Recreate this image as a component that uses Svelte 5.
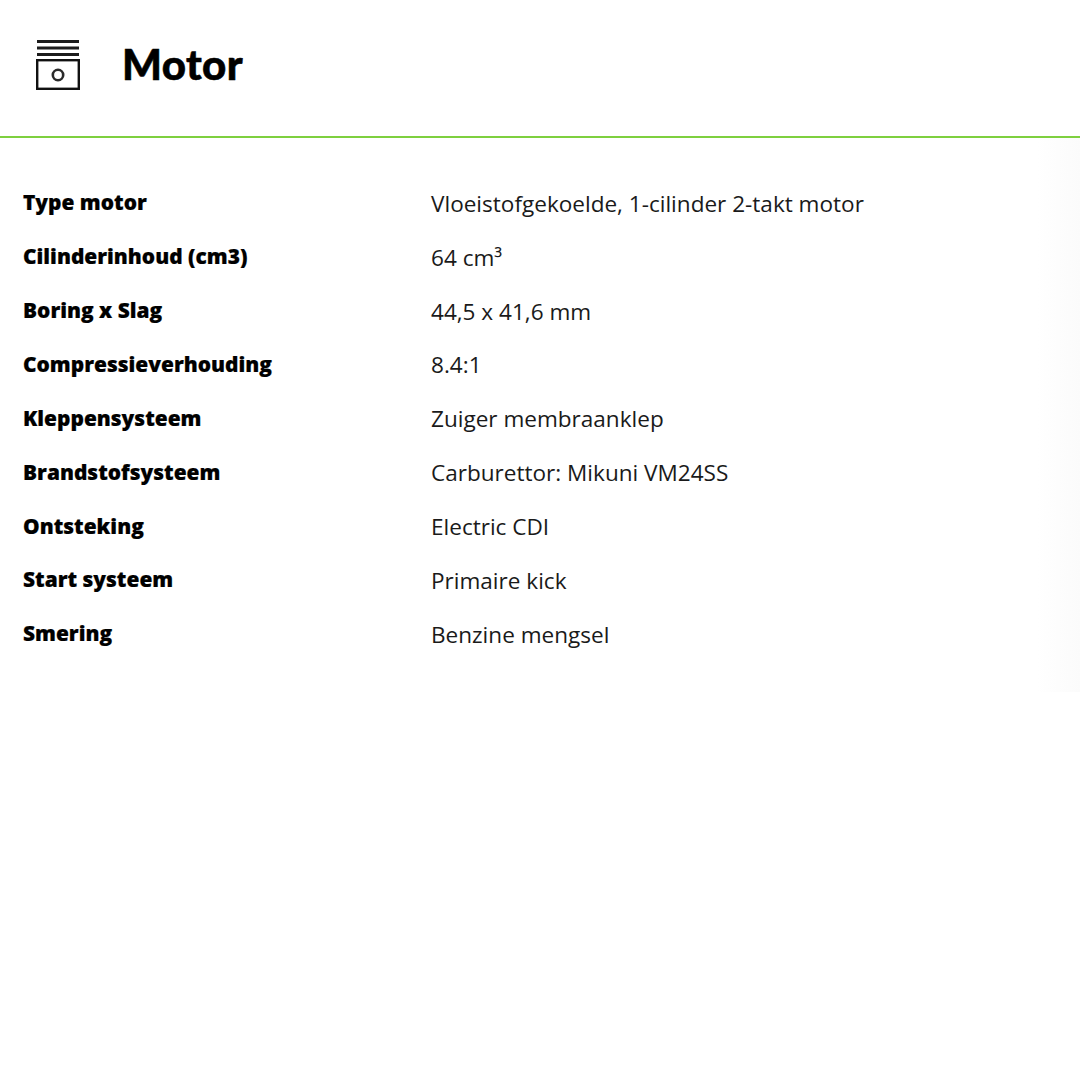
<script>
  const rows = [
    ['Type motor', 'Vloeistofgekoelde, 1-cilinder 2-takt motor'],
    ['Cilinderinhoud (cm3)', '64 cm³'],
    ['Boring x Slag', '44,5 x 41,6 mm'],
    ['Compressieverhouding', '8.4:1'],
    ['Kleppensysteem', 'Zuiger membraanklep'],
    ['Brandstofsysteem', 'Carburettor: Mikuni VM24SS'],
    ['Ontsteking', 'Electric CDI'],
    ['Start systeem', 'Primaire kick'],
    ['Smering', 'Benzine mengsel']
  ];
</script>

<div class="panel">
  <header class="head">
    <svg class="icon" width="44" height="50" viewBox="0 0 44 50" aria-hidden="true">
      <path d="M1 1.5h42M1 8h42M1 14.5h42" stroke="#1c1c1c" stroke-width="3" fill="none"/>
      <rect x="1.2" y="20.2" width="41.6" height="28.6" fill="none" stroke="#111" stroke-width="2.4"/>
      <circle cx="22" cy="35" r="5.2" fill="none" stroke="#2a2a2a" stroke-width="2.6"/>
    </svg>
    <h1>Motor</h1>
  </header>
  <div class="table">
    {#each rows as [k, v]}
      <div class="row"><div class="key">{k}</div><div class="val">{v}</div></div>
    {/each}
  </div>
</div>

<style>
  :global(body) { margin: 0; background: #fff; }
  .panel { height: 692px; background: linear-gradient(90deg, #fff 96%, #fbfbfb 100%); font-family: "Open Sans", sans-serif; color: #111; }
  .head { height: 138px; border-bottom: 2px solid #7ed03f; box-sizing: border-box; display: flex; align-items: center; padding: 0 0 6px 36px; gap: 42px; background: #fff; }
  .icon { flex: none; }
  h1 { margin: -2px 0 0; font: 900 42px/1 "Lato", sans-serif; color: #000; -webkit-text-stroke: 0.6px #000; letter-spacing: 0.4px; }
  .table { padding-top: 39px; }
  .row { display: grid; grid-template-columns: 431px 1fr; height: 53.85px; align-items: center; }
  .key { padding-left: 23px; font: 800 20.9px/1 "Open Sans", sans-serif; color: #000; margin-top: -2px; -webkit-text-stroke: 0.2px #000; }
  .val { font-size: 22.55px; margin-top: -1px; color: #1a1a1a; }
</style>
